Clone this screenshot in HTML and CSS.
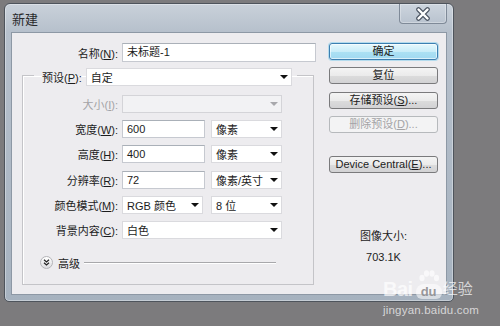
FILE: index.html
```html
<!DOCTYPE html>
<html lang="zh-CN">
<head>
  <meta charset="UTF-8">
  <title>新建</title>
  <link rel="stylesheet" href="styles.css">
</head>
<body>
<div class="dialog">
  <div class="titlebar">
    <span class="title">新建</span>
    <div class="close">
      <svg width="16" height="14" viewBox="0 0 16 14">
        <path d="M3.5 2.5 L12.5 11.5 M12.5 2.5 L3.5 11.5" stroke="#4d5663" stroke-width="4.6" stroke-linecap="round"/>
        <path d="M3.5 2.5 L12.5 11.5 M12.5 2.5 L3.5 11.5" stroke="#fff" stroke-width="2.4" stroke-linecap="round"/>
      </svg>
    </div>
  </div>
  <div class="client">
    <div class="form">
      <div class="name-row">
        <span class="lbl">名称(<u>N</u>):</span>
        <div class="field">未标题-1</div>
      </div>
      <fieldset class="group">
        <legend class="preset">
          <span class="lbl">预设(<u>P</u>):</span>
          <div class="combo preset-combo"><span>自定</span><i class="arrow"></i></div>
        </legend>
        <div class="rows">
          <span class="lbl off">大小(<u>I</u>):</span>
          <div class="combo disabled"><span></span><i class="arrow"></i></div>

          <span class="lbl">宽度(<u>W</u>):</span>
          <div class="pair">
            <div class="field num">600</div>
            <div class="combo unit"><span>像素</span><i class="arrow"></i></div>
          </div>

          <span class="lbl">高度(<u>H</u>):</span>
          <div class="pair">
            <div class="field num">400</div>
            <div class="combo unit"><span>像素</span><i class="arrow"></i></div>
          </div>

          <span class="lbl">分辨率(<u>R</u>):</span>
          <div class="pair">
            <div class="field num">72</div>
            <div class="combo unit"><span>像素/英寸</span><i class="arrow"></i></div>
          </div>

          <span class="lbl">颜色模式(<u>M</u>):</span>
          <div class="pair">
            <div class="combo mode"><span>RGB 颜色</span><i class="arrow"></i></div>
            <div class="combo unit"><span>8 位</span><i class="arrow"></i></div>
          </div>

          <span class="lbl">背景内容(<u>C</u>):</span>
          <div class="combo"><span>白色</span><i class="arrow"></i></div>
        </div>
        <div class="advanced">
          <span class="expand">
            <svg width="7" height="7" viewBox="0 0 7 7">
              <path d="M1 0.8 L3.5 3 L6 0.8 M1 3.8 L3.5 6 L6 3.8" stroke="#222" stroke-width="1.2" fill="none"/>
            </svg>
          </span>
          <span class="adv-text">高级</span>
          <span class="rule"></span>
        </div>
      </fieldset>
    </div>
    <div class="buttons">
      <div class="btn default">确定</div>
      <div class="btn">复位</div>
      <div class="btn">存储预设(<u>S</u>)...</div>
      <div class="btn disabled">删除预设(<u>D</u>)...</div>
      <div class="btn central">Device Central(<u>E</u>)...</div>
      <div class="size-info">图像大小:</div>
      <div class="size-value">703.1K</div>
    </div>
  </div>
</div>
<div class="watermark">
  <div class="wm-logo">
    <span class="wm-bai">Bai</span>
    <span class="wm-paw">
      <svg width="24" height="26" viewBox="0 0 24 26">
        <ellipse cx="5" cy="8" rx="2.6" ry="3.2"/>
        <ellipse cx="9.5" cy="3.5" rx="2.6" ry="3.2"/>
        <ellipse cx="15" cy="3.5" rx="2.6" ry="3.2"/>
        <ellipse cx="19.5" cy="8" rx="2.6" ry="3.2"/>
      </svg>
      <span class="wm-du">du</span>
    </span>
    <span class="wm-cn">经验</span>
  </div>
  <div class="wm-url">jingyan.baidu.com</div>
</div>
</body>
</html>
```

FILE: styles.css
```css
body { margin: 0; padding: 3px 0 0 4px; box-sizing: border-box; width: 500px; height: 326px; background: #7c7b7d; font-family: "Liberation Sans", "Noto Sans CJK SC", sans-serif; font-size: 11px; color: #1c1c1c; position: relative; overflow: hidden; }
u { text-decoration: underline; }

.dialog { box-sizing: border-box; width: 450px; height: 299px; border: 1px solid #4e545c; border-radius: 6px 6px 5px 5px; padding: 0 6px 6px; display: flex; flex-direction: column; background: linear-gradient(to bottom, #c9d1da 0, #b6c0cc 28px, #a6b2bf 100%); box-shadow: inset 0 0 0 1px rgba(255,255,255,.35); }
.titlebar { height: 28px; display: flex; justify-content: space-between; align-items: flex-start; }
.title { font-size: 13px; line-height: 16px; margin: 8px 0 0 1px; color: #2a2a2c; }
.close { box-sizing: border-box; width: 48px; height: 20px; border: 1px solid #7f8a98; border-top: none; border-radius: 0 0 4px 4px; background: linear-gradient(to bottom, #cdd5de, #b9c3cf); display: flex; align-items: center; justify-content: center; box-shadow: inset 0 0 0 1px rgba(255,255,255,.3); }

.client { flex: 1; display: flex; background: #edecef; border: 1px solid #8d98a5; }
.form { padding: 10px 0 0 10px; }
.lbl { white-space: nowrap; justify-self: end; }
.lbl.off { color: #a3a3a6; }

.name-row { display: grid; grid-template-columns: 96px 194px; column-gap: 4px; align-items: center; }
.field { box-sizing: border-box; height: 19px; line-height: 17px; padding: 0 4px; background: #fff; border: 1px solid #c6c9d0; border-top-color: #aab0b8; }
.field.num { width: 83px; height: 18px; line-height: 16px; }

.group { box-sizing: border-box; width: 292px; min-width: 0; margin: 2px 0 0; padding: 0 0 15px; border: 1px solid #c4c4c8; box-shadow: inset 1px 1px 0 #fff; }
.preset { margin-left: 11px; padding: 4px 5px 0 8px; display: flex; align-items: center; }
.preset-combo { width: 206px; height: 17px; margin-left: 4px; }

.rows { display: grid; grid-template-columns: 95px 160px; column-gap: 4px; row-gap: 7.4px; grid-auto-rows: 18px; align-items: center; margin-top: 8.5px; }
.pair { display: flex; justify-content: space-between; }

.combo { box-sizing: border-box; height: 18px; padding: 0 3px 0 4px; background: #fff; border: 1px solid #dadade; display: flex; align-items: center; justify-content: space-between; white-space: nowrap; }
.combo.unit { width: 71px; }
.combo.mode { width: 81px; }
.combo.disabled { background: #f2f2f4; border-color: #d4d4d8; }
.combo.disabled .arrow { border-top-color: #a8a8ac; }
.arrow { width: 0; height: 0; border-left: 4px solid transparent; border-right: 4px solid transparent; border-top: 4px solid #111; }

.advanced { display: flex; align-items: center; height: 13px; margin: 17px 37px 0 17px; }
.expand { box-sizing: border-box; width: 13px; height: 13px; border-radius: 50%; border: 1px solid #b4b4b8; background: linear-gradient(to bottom, #ffffff, #dcdce0); display: flex; align-items: center; justify-content: center; }
.adv-text { margin-left: 5px; }
.rule { flex: 1; height: 1px; margin-left: 4px; background: #a8a8ab; box-shadow: 0 1px 0 #fff; }

.buttons { width: 109px; margin: 10px 8px 0 auto; display: flex; flex-direction: column; }
.btn { box-sizing: border-box; height: 17px; line-height: 15px; margin-bottom: 7.3px; text-align: center; white-space: nowrap; border: 1px solid #7a7a7c; border-radius: 3px; background: linear-gradient(to bottom, #f4f4f4 0, #ebebeb 50%, #dcdcdc 51%, #d2d2d4 100%); }
.btn.default { border-color: #3c7fb1; background: linear-gradient(to bottom, #e6f8fd 0, #c9edf9 50%, #ace1f4 51%, #a0d9f1 100%); box-shadow: 0 0 0 1px rgba(110,200,235,.45), inset 0 0 0 1px rgba(255,255,255,.6); }
.btn.disabled { color: #a3a3a6; border-color: #b6b9bc; background: #f3f3f4; }
.btn.central { margin-top: 16px; }
.size-info { margin-top: 47.7px; text-align: center; line-height: 16px; }
.size-value { margin-top: 5px; text-align: center; line-height: 16px; }

.watermark { position: absolute; left: 383px; top: 270px; color: rgba(255,255,255,.7); }
.wm-logo { display: flex; align-items: flex-end; height: 29px; }
.wm-bai { font-size: 20px; font-weight: bold; line-height: 20px; letter-spacing: -0.5px; }
.wm-paw { position: relative; width: 26px; height: 29px; margin-left: 3px; }
.wm-paw svg { position: absolute; left: 1px; top: 0; fill: rgba(255,255,255,.65); }
.wm-du { position: absolute; left: 0; bottom: 0; width: 26px; height: 15px; border-radius: 8px 8px 6px 6px; background: rgba(255,255,255,.55); color: rgba(140,139,142,.9); font-size: 13px; font-weight: bold; line-height: 15px; text-align: center; }
.wm-cn { font-size: 15px; line-height: 20px; margin-left: 1px; }
.wm-url { font-size: 11.5px; margin-top: 5px; letter-spacing: 0.2px; }
```
